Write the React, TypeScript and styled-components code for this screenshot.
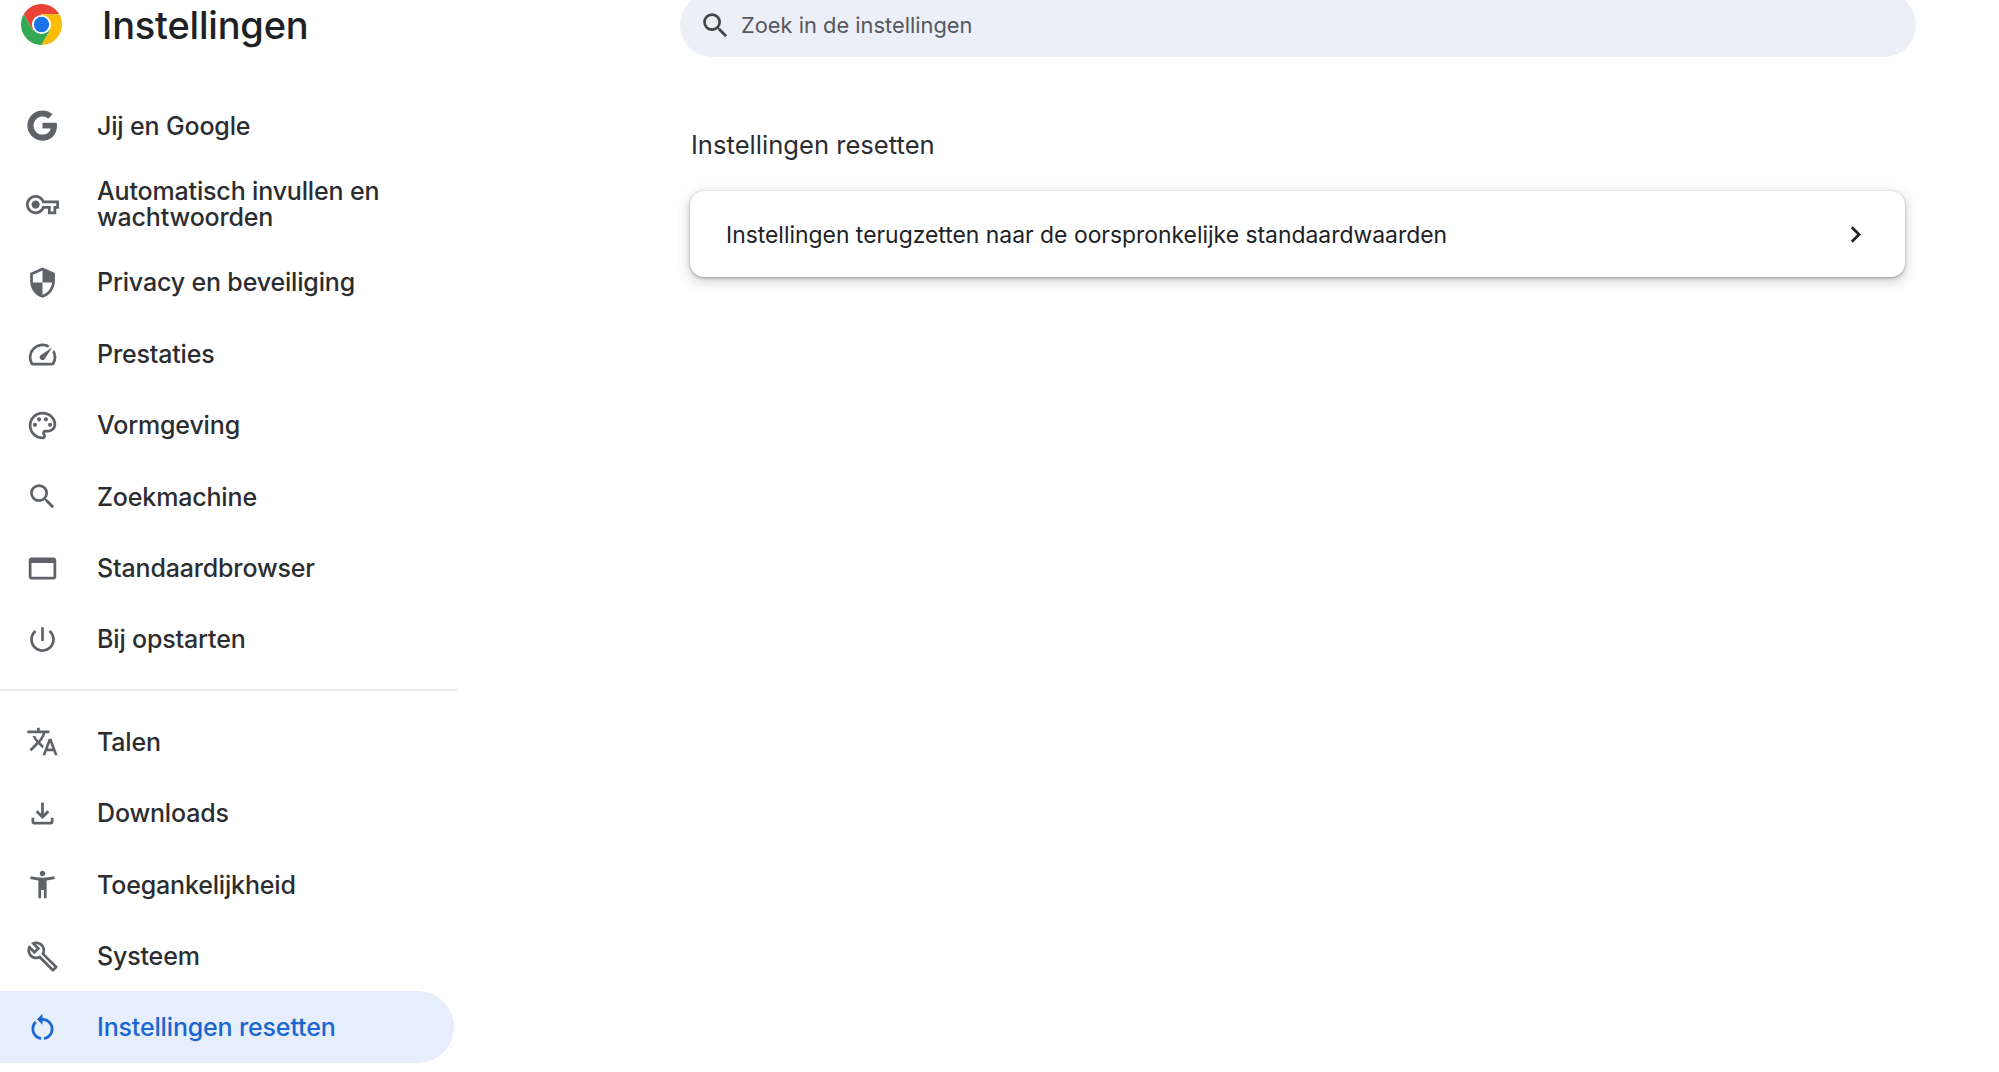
import React from 'react';
import styled, { createGlobalStyle } from 'styled-components';

const GlobalStyle = createGlobalStyle`
  html, body {
    margin: 0;
    height: 100%;
    background: #fff;
    overflow: hidden;
  }
  body {
    font-family: Inter, "Liberation Sans", sans-serif;
    color: #202124;
  }
`;

const Page = styled.div`
  display: flex;
  height: 1072px;
  overflow: hidden;
`;

const Sidebar = styled.aside`
  width: 457px;
  flex: none;
  display: flex;
  flex-direction: column;
`;

const Brand = styled.header`
  height: 89.7px;
  padding-left: 20.5px;
  display: flex;
  align-items: flex-start;
  gap: 40.5px;
  box-sizing: border-box;
  padding-top: 4px;
`;

const Logo = styled.svg`
  width: 41px;
  height: 41px;
  flex: none;
`;

const Title = styled.h1`
  margin: -1px 0 0;
  font-size: 38px;
  line-height: 44px;
  font-weight: 500;
  letter-spacing: -0.2px;
  color: #202124;
`;

const NavItem = styled.div<{ $active?: boolean }>`
  min-height: 71.4px;
  width: ${(p) => (p.$active ? '454px' : 'auto')};
  box-sizing: border-box;
  padding: 17.2px 60px 16.2px 26px;
  display: flex;
  align-items: center;
  gap: 38px;
  font-size: 25px;
  line-height: 25.5px;
  font-weight: 500;
  letter-spacing: -0.16px;
  color: ${(p) => (p.$active ? '#1a66d2' : '#2b2d31')};
  background: ${(p) => (p.$active ? '#e6eefb' : 'transparent')};
  border-radius: ${(p) => (p.$active ? '0 36px 36px 0' : '0')};
`;

const NavLabel = styled.span`
  padding-top: 1px;
`;

const NavIcon = styled.svg<{ $active?: boolean }>`
  width: 33px;
  height: 33px;
  flex: none;
  fill: ${(p) => (p.$active ? '#1a66d2' : '#5f6368')};
`;

const Divider = styled.hr`
  width: 457px;
  height: 2px;
  margin: 14.5px 0;
  border: 0;
  background: #ececee;
`;

const Main = styled.main`
  flex: none;
  margin-left: 223px;
  width: 1236px;
  display: flex;
  flex-direction: column;
`;

const SearchBar = styled.div`
  height: 64px;
  margin-top: -7px;
  padding-left: 19px;
  display: flex;
  align-items: center;
  gap: 9px;
  background: #eceff8;
  border-radius: 32px;
  box-sizing: border-box;
`;

const SearchIcon = styled.svg`
  width: 33px;
  height: 33px;
  flex: none;
  fill: #44474a;
`;

const SearchText = styled.span`
  font-size: 21.85px;
  color: #55585c;
`;

const Section = styled.section`
  width: 1215px;
  margin: 0 0 0 10px;
`;

const SectionTitle = styled.h2`
  margin: 0;
  padding: 72px 0 30px 1px;
  font-size: 25.6px;
  line-height: 32px;
  font-weight: 400;
  color: #2b2d31;
`;

const Card = styled.div`
  height: 86px;
  padding: 0 36px;
  display: flex;
  align-items: center;
  justify-content: space-between;
  background: #fff;
  border-radius: 14px;
  box-shadow: 0 1px 3px rgba(60, 64, 67, 0.45), 0 4px 12px 2px rgba(60, 64, 67, 0.2);
  font-size: 22.9px;
  color: #202124;
`;

const CardLabel = styled.span`
  padding-top: 1px;
`;

const Chevron = styled.svg`
  width: 33px;
  height: 33px;
  flex: none;
  margin-right: -3px;
  fill: #202124;
`;

type NavEntry = { label: React.ReactNode; icon: React.ReactNode; active?: boolean };

const path = (d: string) => <path d={d} />;

const firstGroup: NavEntry[] = [
  {
    label: 'Jij en Google',
    icon: (
      <>
        {path('M22.56 12.25c0-.78-.07-1.53-.2-2.25H12v4.26h5.92c-.26 1.37-1.04 2.53-2.21 3.31v2.77h3.57c2.08-1.92 3.28-4.74 3.28-8.09z')}
        {path('M12 23c2.97 0 5.46-.98 7.28-2.66l-3.57-2.77c-.98.66-2.23 1.06-3.71 1.06-2.86 0-5.29-1.93-6.16-4.53H2.18v2.84C3.99 20.53 7.7 23 12 23z')}
        {path('M5.84 14.09c-.22-.66-.35-1.36-.35-2.09s.13-1.43.35-2.09V7.07H2.18C1.43 8.55 1 10.22 1 12s.43 3.45 1.18 4.93l2.85-2.22.81-.62z')}
        {path('M12 5.38c1.62 0 3.06.56 4.21 1.64l3.15-3.15C17.45 2.09 14.97 1 12 1 7.7 1 3.99 3.47 2.18 7.07l3.66 2.84c.87-2.6 3.3-4.53 6.16-4.53z')}
      </>
    ),
  },
  {
    label: 'Automatisch invullen en wachtwoorden',
    icon: path('M22 19h-6v-4h-2.68c-1.14 2.42-3.6 4-6.32 4-3.86 0-7-3.14-7-7s3.14-7 7-7c2.72 0 5.17 1.58 6.32 4H24v6h-2v4zm-4-2h2v-4h2v-2H11.94l-.23-.67C11.01 8.34 9.11 7 7 7c-2.76 0-5 2.24-5 5s2.24 5 5 5c2.11 0 4.01-1.34 4.71-3.33l.23-.67H18v4zM7 15c-1.65 0-3-1.35-3-3s1.35-3 3-3 3 1.35 3 3-1.35 3-3 3z'),
  },
  {
    label: 'Privacy en beveiliging',
    icon: path('M12 1L3 5v6c0 5.55 3.84 10.74 9 12 5.16-1.26 9-6.45 9-12V5l-9-4zm0 10.99h7c-.53 4.12-3.28 7.79-7 8.94V12H5V6.3l7-3.11v8.8z'),
  },
  {
    label: 'Prestaties',
    icon: (
      <>
        {path('M20.38 8.57l-1.23 1.85a8 8 0 0 1-.22 7.58H5.07A8 8 0 0 1 15.58 6.85l1.85-1.23A10 10 0 0 0 3.35 19a2 2 0 0 0 1.72 1h13.85a2 2 0 0 0 1.74-1 10 10 0 0 0-.27-10.44z')}
        {path('M10.59 15.41a2 2 0 0 0 2.83 0l5.66-8.49-8.49 5.66a2 2 0 0 0 0 2.83z')}
      </>
    ),
  },
  {
    label: 'Vormgeving',
    icon: (
      <>
        {path('M12 22C6.49 22 2 17.51 2 12S6.49 2 12 2s10 4.04 10 9c0 3.31-2.69 6-6 6h-1.77c-.28 0-.5.22-.5.5 0 .12.05.23.13.33.41.47.64 1.06.64 1.67A2.5 2.5 0 0 1 12 22zm0-18c-4.41 0-8 3.59-8 8s3.59 8 8 8c.28 0 .5-.22.5-.5a.54.54 0 0 0-.14-.35c-.41-.46-.63-1.05-.63-1.65a2.5 2.5 0 0 1 2.5-2.5H16c2.21 0 4-1.79 4-4 0-3.86-3.59-7-8-7z')}
        <circle cx="6.5" cy="11.5" r="1.5" />
        <circle cx="9.5" cy="7.5" r="1.5" />
        <circle cx="14.5" cy="7.5" r="1.5" />
        <circle cx="17.5" cy="11.5" r="1.5" />
      </>
    ),
  },
  {
    label: 'Zoekmachine',
    icon: path('M15.5 14h-.79l-.28-.27A6.471 6.471 0 0 0 16 9.5 6.5 6.5 0 1 0 9.5 16c1.61 0 3.09-.59 4.23-1.57l.27.28v.79l5 4.99L20.49 19l-4.99-5zm-6 0C7.01 14 5 11.99 5 9.5S7.01 5 9.5 5 14 7.01 14 9.5 11.99 14 9.5 14z'),
  },
  {
    label: 'Standaardbrowser',
    icon: path('M20 4H4c-1.11 0-2 .9-2 2v12c0 1.1.89 2 2 2h16c1.1 0 2-.9 2-2V6c0-1.1-.89-2-2-2zm0 14H4V8h16v10z'),
  },
  {
    label: 'Bij opstarten',
    icon: path('M13 3h-2v10h2V3zm4.83 2.17l-1.42 1.42C17.99 7.86 19 9.81 19 12c0 3.87-3.13 7-7 7s-7-3.13-7-7c0-2.19 1.01-4.14 2.58-5.42L6.17 5.17C4.23 6.82 3 9.26 3 12c0 4.97 4.03 9 9 9s9-4.03 9-9c0-2.74-1.23-5.18-3.17-6.83z'),
  },
];

const secondGroup: NavEntry[] = [
  {
    label: 'Talen',
    icon: path('M12.87 15.07l-2.54-2.51.03-.03c1.74-1.94 2.98-4.17 3.71-6.53H17V4h-7V2H8v2H1v1.99h11.17C11.5 7.92 10.44 9.75 9 11.35 8.07 10.32 7.3 9.19 6.69 8h-2c.73 1.63 1.73 3.17 2.98 4.56l-5.09 5.02L4 19l5-5 3.11 3.11.76-2.04zM18.5 10h-2L12 22h2l1.12-3h4.75L21 22h2l-4.5-12zm-2.62 7l1.62-4.33L19.12 17h-3.24z'),
  },
  {
    label: 'Downloads',
    icon: path('M18 15v3H6v-3H4v3c0 1.1.9 2 2 2h12c1.1 0 2-.9 2-2v-3h-2zm-1-4l-1.41-1.41L13 12.17V4h-2v8.17L8.41 9.59 7 11l5 5 5-5z'),
  },
  {
    label: 'Toegankelijkheid',
    icon: path('M20.5 6c-2.61.7-5.67 1-8.5 1s-5.89-.3-8.5-1L3 8c1.86.5 4 .83 6 1v13h2v-6h2v6h2V9c2-.17 4.14-.5 6-1l-.5-2zM12 6c1.1 0 2-.9 2-2s-.9-2-2-2-2 .9-2 2 .9 2 2 2z'),
  },
  {
    label: 'Systeem',
    icon: path('M22.61 18.99l-9.08-9.08c.93-2.34.45-5.1-1.44-7C9.79.61 6.21.4 3.66 2.26L7.5 6.11 6.08 7.52 2.25 3.69C.39 6.23.6 9.82 2.9 12.11c1.86 1.86 4.57 2.35 6.89 1.48l9.11 9.11c.39.39 1.02.39 1.41 0l2.3-2.3c.4-.38.4-1.01 0-1.41zm-3 1.6l-9.46-9.46c-.61.45-1.29.72-2 .82-1.36.2-2.79-.21-3.83-1.25C3.37 9.76 2.93 8.5 3 7.26l3.09 3.09 4.24-4.24-3.09-3.09c1.24-.07 2.49.37 3.44 1.31 1.08 1.08 1.49 2.57 1.24 3.96-.12.71-.42 1.37-.88 1.96l9.45 9.45-.88.88z'),
  },
  {
    label: 'Instellingen resetten',
    active: true,
    icon: path('M12 5V2L8 6l4 4V7c3.31 0 6 2.69 6 6 0 2.97-2.17 5.43-5 5.91v2.02c3.95-.49 7-3.85 7-7.93 0-4.42-3.58-8-8-8zm-6 8c0-1.65.67-3.15 1.76-4.24L6.34 7.34A8.014 8.014 0 0 0 4 13c0 4.08 3.05 7.44 7 7.93v-2.02c-2.83-.48-5-2.94-5-5.91z'),
  },
];

const ChromeLogo = () => (
  <Logo viewBox="0 0 24 24">
    <path fill="#ea4335" d="M22.39 6A12 12 0 0 0 1.61 6L6.8 15 12 6z" />
    <path fill="#34a853" d="M1.61 6A12 12 0 0 0 12 24l5.2-9H6.8z" />
    <path fill="#fbbc04" d="M22.39 6A12 12 0 0 1 12 24l5.2-9L12 6z" />
    <circle cx="12" cy="12" r="5.6" fill="#fff" />
    <circle cx="12" cy="12" r="4.5" fill="#1a73e8" />
  </Logo>
);

const NavRow = ({ entry }: { entry: NavEntry }) => (
  <NavItem $active={entry.active}>
    <NavIcon viewBox="0 0 24 24" $active={entry.active}>
      {entry.icon}
    </NavIcon>
    <NavLabel>{entry.label}</NavLabel>
  </NavItem>
);

const App: React.FC = () => {
  return (
    <Page>
      <GlobalStyle />
      <Sidebar>
        <Brand>
          <ChromeLogo />
          <Title>Instellingen</Title>
        </Brand>
        {firstGroup.map((entry, i) => (
          <NavRow key={i} entry={entry} />
        ))}
        <Divider />
        {secondGroup.map((entry, i) => (
          <NavRow key={i} entry={entry} />
        ))}
      </Sidebar>
      <Main>
        <SearchBar>
          <SearchIcon viewBox="0 0 24 24">
            <path d="M15.5 14h-.79l-.28-.27A6.471 6.471 0 0 0 16 9.5 6.5 6.5 0 1 0 9.5 16c1.61 0 3.09-.59 4.23-1.57l.27.28v.79l5 4.99L20.49 19l-4.99-5zm-6 0C7.01 14 5 11.99 5 9.5S7.01 5 9.5 5 14 7.01 14 9.5 11.99 14 9.5 14z" />
          </SearchIcon>
          <SearchText>Zoek in de instellingen</SearchText>
        </SearchBar>
        <Section>
          <SectionTitle>Instellingen resetten</SectionTitle>
          <Card>
            <CardLabel>Instellingen terugzetten naar de oorspronkelijke standaardwaarden</CardLabel>
            <Chevron viewBox="0 0 24 24">
              <path d="M10 6L8.59 7.41 13.17 12l-4.58 4.59L10 18l6-6z" />
            </Chevron>
          </Card>
        </Section>
      </Main>
    </Page>
  );
};

export default App;
